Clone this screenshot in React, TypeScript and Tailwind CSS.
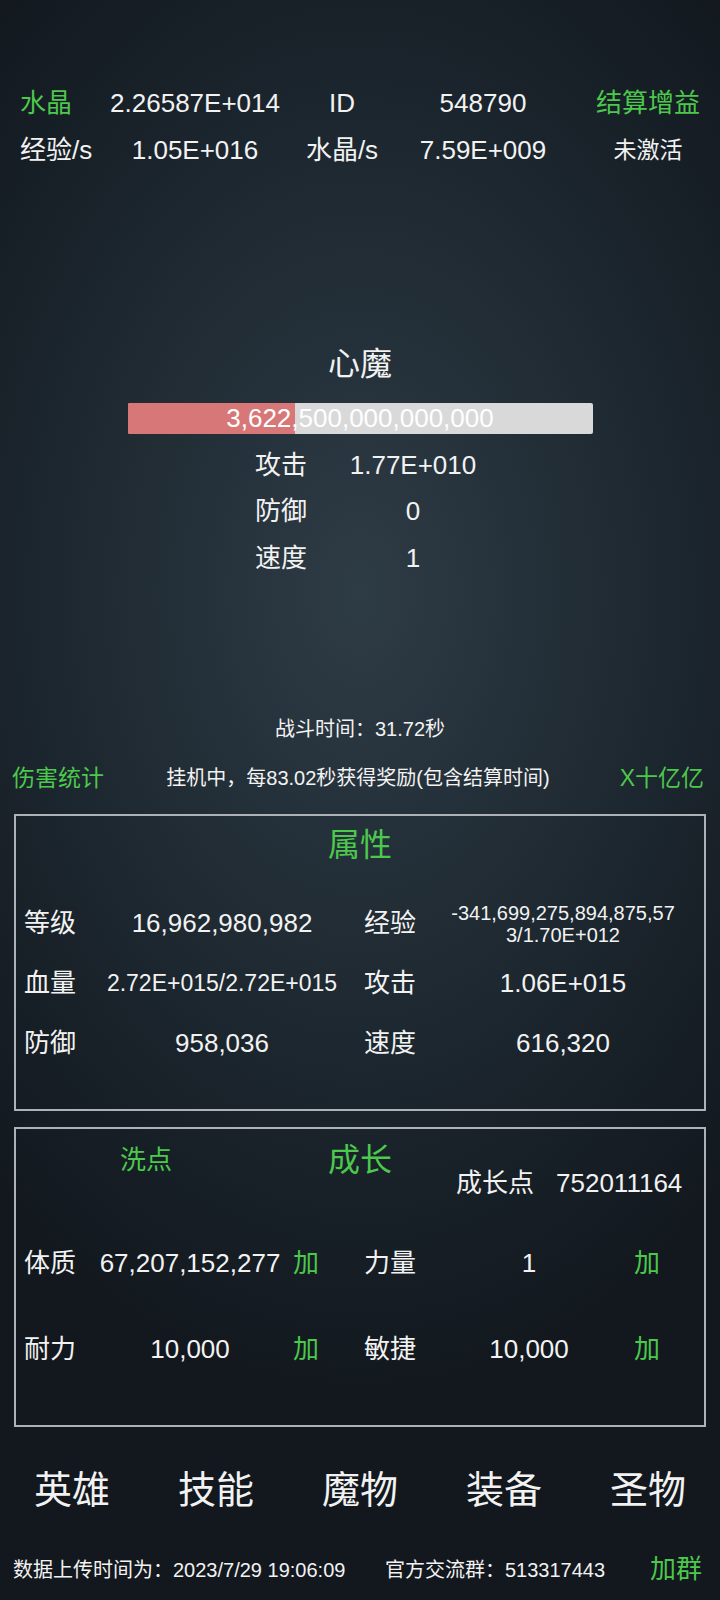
const green = "text-[#4cc84c]"

const topRows = [
  ["水晶", "2.26587E+014", "ID", "548790", "结算增益"],
  ["经验/s", "1.05E+016", "水晶/s", "7.59E+009", "未激活"],
]

const bossStats = [
  ["攻击", "1.77E+010"],
  ["防御", "0"],
  ["速度", "1"],
]

const navItems = ["英雄", "技能", "魔物", "装备", "圣物"]

function TopBar() {
  return (
    <div className="grid grid-cols-[100px_150px_144px_138px_24px_144px] pl-[20px] pt-[80px] text-[26px]">
      {topRows.map((row, r) =>
        row.map((cell, i) => (
          <div
            key={`${r}-${i}`}
            className={`flex h-[47px] items-center whitespace-nowrap ${
              i === 0 ? "justify-start" : "justify-center"
            } ${i === 4 ? "col-start-6" : ""} ${
              r === 0 && (i === 0 || i === 4) ? green : ""
            } ${r === 1 && i === 4 ? "text-[23px]" : ""}`}
          >
            {cell}
          </div>
        ))
      )}
    </div>
  )
}

function Boss() {
  return (
    <div className="mt-[170px] flex flex-col items-center">
      <div className="h-[40px] text-[32px] leading-[40px]">心魔</div>
      <div className="relative mt-[19px] h-[31px] w-[465px] overflow-hidden rounded-[2px] bg-[#d9d9d9]">
        <div className="h-full w-[36%] bg-[#d87777]" />
        <div className="absolute inset-0 flex items-center justify-center text-[26px] text-white">
          3,622,500,000,000,000
        </div>
      </div>
      <div className="mt-[8px] ml-[54px] grid w-[264px] grid-cols-[52px_212px]">
        {bossStats.map(([label, value]) => (
          <div key={label} className="contents">
            <div className="flex h-[46.5px] items-center text-[26px]">{label}</div>
            <div className="flex h-[46.5px] items-center justify-center text-[26px]">
              {value}
            </div>
          </div>
        ))}
      </div>
    </div>
  )
}

function BattleInfo() {
  return (
    <>
      <div className="mt-[132px] h-[30px] text-center text-[20px] leading-[30px]">
        战斗时间：31.72秒
      </div>
      <div className="mt-[17px] grid h-[30px] grid-cols-[1fr_auto_1fr] items-center px-[12px] pr-[16px]">
        <span className={`justify-self-start text-[23px] ${green}`}>伤害统计</span>
        <span className="text-[20px]">挂机中，每83.02秒获得奖励(包含结算时间)</span>
        <span className={`justify-self-end text-[23px] ${green}`}>X十亿亿</span>
      </div>
    </>
  )
}

function AttrPanel() {
  const cell = "flex h-[60px] items-center whitespace-nowrap"
  return (
    <div className="mx-[14px] mt-[23px] h-[297px] border-2 border-[#adb2b6] pt-[9px]">
      <div className={`h-[40px] text-center text-[32px] leading-[40px] ${green}`}>属性</div>
      <div className="mt-[29px] grid grid-cols-[76px_244px_86px_266px] pl-[8px] text-[26px]">
        <div className={cell}>等级</div>
        <div className={`${cell} justify-center`}>16,962,980,982</div>
        <div className={`${cell} pl-[20px]`}>经验</div>
        <div className={`${cell} flex-col justify-center text-[20px] leading-[22px]`}>
          <span>-341,699,275,894,875,57</span>
          <span>3/1.70E+012</span>
        </div>

        <div className={cell}>血量</div>
        <div className={`${cell} justify-center text-[23px]`}>2.72E+015/2.72E+015</div>
        <div className={`${cell} pl-[20px]`}>攻击</div>
        <div className={`${cell} justify-center`}>1.06E+015</div>

        <div className={cell}>防御</div>
        <div className={`${cell} justify-center`}>958,036</div>
        <div className={`${cell} pl-[20px]`}>速度</div>
        <div className={`${cell} justify-center`}>616,320</div>
      </div>
    </div>
  )
}

function GrowthPanel() {
  const cell = "flex h-[86px] items-center whitespace-nowrap"
  const rows = [
    ["体质", "67,207,152,277", "力量", "1"],
    ["耐力", "10,000", "敏捷", "10,000"],
  ]
  return (
    <div className="mx-[14px] mt-[16px] h-[300px] border-2 border-[#adb2b6] pt-[11px]">
      <div className="grid h-[63px] grid-cols-[260px_168px_1fr] text-[26px] leading-[40px]">
        <div className={`text-center ${green}`}>洗点</div>
        <div className={`text-center text-[32px] ${green}`}>成长</div>
        <div className="mt-[23px] flex gap-[22px] pl-[12px] whitespace-nowrap">
          <span>成长点</span>
          <span>752011164</span>
        </div>
      </div>
      <div className="mt-[18px] grid grid-cols-[74px_184px_48px_100px_198px_38px] pl-[8px] text-[26px]">
        {rows.map(([l1, v1, l2, v2]) => (
          <div key={l1} className="contents">
            <div className={cell}>{l1}</div>
            <div className={`${cell} justify-center`}>{v1}</div>
            <div className={`${cell} justify-center ${green}`}>加</div>
            <div className={`${cell} pl-[34px]`}>{l2}</div>
            <div className={`${cell} justify-center`}>{v2}</div>
            <div className={`${cell} justify-center ${green}`}>加</div>
          </div>
        ))}
      </div>
    </div>
  )
}

function BottomNav() {
  return (
    <>
      <div className="mt-[34px] grid h-[60px] grid-cols-5 items-center text-[38px]">
        {navItems.map((item) => (
          <div key={item} className="text-center">
            {item}
          </div>
        ))}
      </div>
      <div className="mt-[34px] flex h-[30px] items-center pl-[13px] pr-[18px] text-[20px] whitespace-nowrap">
        <span className="w-[372px]">数据上传时间为：2023/7/29 19:06:09</span>
        <span>官方交流群：513317443</span>
        <span className={`ml-auto text-[26px] ${green}`}>加群</span>
      </div>
    </>
  )
}

export default function App() {
  return (
    <div className="h-[1600px] w-[720px] overflow-hidden bg-[radial-gradient(ellipse_75%_50%_at_50%_37%,#2e3c46_0%,#1c262e_60%,#12181e_100%)] font-['Liberation_Sans','Noto_Sans_CJK_SC',sans-serif] text-[#f2f2f2]">
      <TopBar />
      <Boss />
      <BattleInfo />
      <AttrPanel />
      <GrowthPanel />
      <BottomNav />
    </div>
  )
}
